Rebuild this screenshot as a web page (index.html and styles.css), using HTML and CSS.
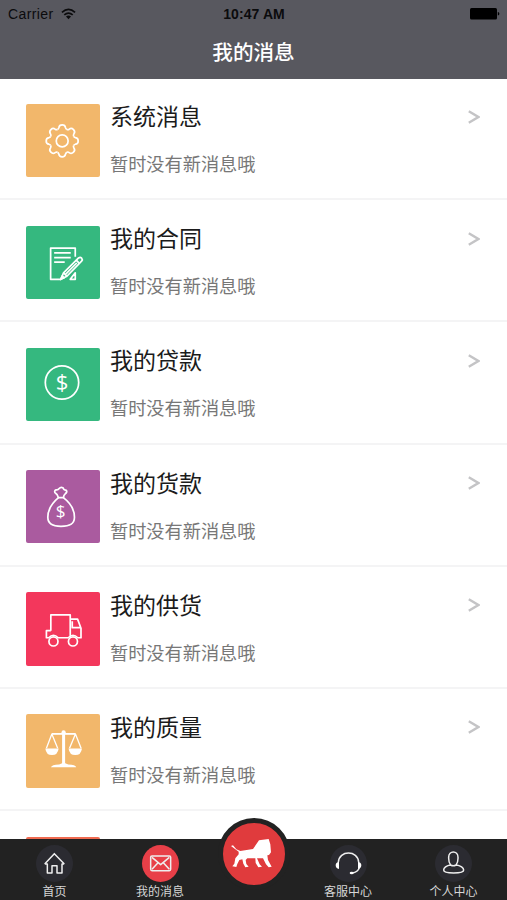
FILE: index.html
```
<!DOCTYPE html>
<html lang="zh-CN">
<head>
  <meta charset="UTF-8" />
  <meta name="viewport" content="width=device-width, initial-scale=1.0" />
  <title>我的消息</title>
  <link rel="stylesheet" href="styles.css">
</head>
<body>
  <div class="app">
    <header class="header">
      <div class="status">
        <div class="carrier">
          <span>Carrier</span>
          <svg class="wifi" viewBox="0 0 16 12">
            <path d="M1 4.2Q8-2 15 4.2M3.5 7Q8 3 12.5 7" fill="none" stroke="#0b0b0d" stroke-width="1.8"/>
            <path d="M5.3 8.6Q8 6.6 10.7 8.6L8 11.5Z" fill="#0b0b0d"/>
          </svg>
        </div>
        <span class="time">10:47 AM</span>
        <svg class="battery" viewBox="0 0 30 12">
          <rect x="0" y="0" width="27" height="11.4" rx="1.5"/>
          <path d="M27.8 4Q29.4 4.2 29.4 5.8T27.8 7.6Z"/>
        </svg>
      </div>
      <h1>我的消息</h1>
    </header>

    <main class="list">
      <div class="row">
        <div class="tile orange">
          <svg viewBox="0 0 73 73">
            <defs><path id="tooth" d="M-4.7-11.4Q-3.6-11.8-3.3-13.2Q-2.9-15.9 0-15.9T3.3-13.2Q3.6-11.8 4.7-11.4"/></defs>
            <g transform="translate(36 36.7)">
              <use href="#tooth"/>
              <use href="#tooth" transform="rotate(45)"/>
              <use href="#tooth" transform="rotate(90)"/>
              <use href="#tooth" transform="rotate(135)"/>
              <use href="#tooth" transform="rotate(180)"/>
              <use href="#tooth" transform="rotate(225)"/>
              <use href="#tooth" transform="rotate(270)"/>
              <use href="#tooth" transform="rotate(315)"/>
              <circle r="5.9"/>
            </g>
          </svg>
        </div>
        <div class="text"><h2>系统消息</h2><p>暂时没有新消息哦</p></div>
        <svg class="arrow" viewBox="0 0 12 14"><path d="M.8 1.3L10.3 7L.8 12.7"/></svg>
      </div>

      <div class="row">
        <div class="tile green">
          <svg viewBox="0 0 73 73">
            <path d="M49 30.5V22H24.5V53H35M28 26.8H44.5M28 31.5H44.5M28 36H38.5"/>
            <path d="M34.6 53L37.3 46.6L52.3 31.8Q54 30.6 55.3 32Q56.6 33.5 55.3 35L40.7 50Z"/>
            <path d="M37.3 46.6L40.7 50M50 34L53 37.2M39 48.3L50.5 36.8"/>
            <path d="M34.6 53L36 49.5L38 51.5Z" fill="#fff"/>
            <path d="M44 53H49V46.5Z"/>
          </svg>
        </div>
        <div class="text"><h2>我的合同</h2><p>暂时没有新消息哦</p></div>
        <svg class="arrow" viewBox="0 0 12 14"><path d="M.8 1.3L10.3 7L.8 12.7"/></svg>
      </div>

      <div class="row">
        <div class="tile green">
          <svg viewBox="0 0 73 73">
            <circle cx="35.8" cy="34.3" r="16.6"/>
            <text class="dollar" x="35.9" y="42" font-size="22">$</text>
          </svg>
        </div>
        <div class="text"><h2>我的贷款</h2><p>暂时没有新消息哦</p></div>
        <svg class="arrow" viewBox="0 0 12 14"><path d="M.8 1.3L10.3 7L.8 12.7"/></svg>
      </div>

      <div class="row">
        <div class="tile purple">
          <svg viewBox="0 0 73 73">
            <path d="M32.3 27.5Q31.5 24 28.7 22.3Q28 20.5 30 19.8Q31.8 20.2 33 18.5Q34.5 16.5 37 17.8Q37 19.5 40.2 20.3Q41.3 22 39 23.8Q37.5 25 37.2 27.5Z"/>
            <path d="M32.3 27.5C27 32 21.7 39 21.7 47C21.7 53.5 26 56 34.8 56C44 56 48.2 53.5 48.2 47C48.2 39 43 32 37.2 27.5"/>
            <text class="dollar" x="34.4" y="46.6" font-size="17">$</text>
          </svg>
        </div>
        <div class="text"><h2>我的货款</h2><p>暂时没有新消息哦</p></div>
        <svg class="arrow" viewBox="0 0 12 14"><path d="M.8 1.3L10.3 7L.8 12.7"/></svg>
      </div>

      <div class="row">
        <div class="tile red">
          <svg viewBox="0 0 73 73">
            <path d="M24.7 38.5V22.8H44V44.8M24.7 38.5H20.3V45.5H22.5Q27.3 40.5 32 45.5H42Q46.7 40.5 51.5 45.5H54.7V36L51.3 27H44M46 29V35.5H54.5"/>
            <circle cx="27.3" cy="49.2" r="4.5"/>
            <circle cx="46.7" cy="49.2" r="4.5"/>
          </svg>
        </div>
        <div class="text"><h2>我的供货</h2><p>暂时没有新消息哦</p></div>
        <svg class="arrow" viewBox="0 0 12 14"><path d="M.8 1.3L10.3 7L.8 12.7"/></svg>
      </div>

      <div class="row">
        <div class="tile orange">
          <svg viewBox="0 0 73 73">
            <path d="M25.7 19.8H49.3" stroke-width="1.8"/>
            <path d="M37.4 17.5V51" stroke-width="3"/>
            <path d="M20.3 34L25.7 20L31.5 34M43.3 34L49.2 20L54.8 34" stroke-width="1.3"/>
            <g fill="#fff" stroke="none">
              <circle cx="37.4" cy="18.3" r="2.1"/>
              <path d="M19.2 34.2H32.5Q31.5 40.9 25.8 40.9T19.2 34.2Z"/>
              <path d="M42.3 34.2H55.7Q54.7 40.9 49 40.9T42.3 34.2Z"/>
              <path d="M24.8 53Q25.5 50.5 33 50.2Q35.5 49.5 37.4 48Q39.5 49.5 42 50.2Q49.5 50.5 50 53Z"/>
            </g>
          </svg>
        </div>
        <div class="text"><h2>我的质量</h2><p>暂时没有新消息哦</p></div>
        <svg class="arrow" viewBox="0 0 12 14"><path d="M.8 1.3L10.3 7L.8 12.7"/></svg>
      </div>

      <div class="row">
        <div class="tile coral"></div>
      </div>
    </main>

    <nav class="tabbar">
      <a class="tab">
        <svg class="round" viewBox="109 120 111 111">
          <path d="M135 177L164 146L194 177M135 177H143V204H157V182H172V204H187V177H194"/>
        </svg>
        <span>首页</span>
      </a>
      <a class="tab active">
        <svg class="round" viewBox="425 120 111 111">
          <rect x="451" y="153" width="60" height="44" rx="4"/>
          <path d="M455 157L481 179L507 157M455 193L473 173M507 193L489 173"/>
        </svg>
        <span>我的消息</span>
      </a>
      <a class="tab center">
        <svg class="lion" viewBox="70 54 186 186">
          <path d="M94 123L100 121L110 133L122 138L160 132L178 106L207 102L212 118L214 142L208 150L203 151L205 165L216 185L207 187L199 178L190 160L172 160L180 178L187 185L176 187L168 174L167 160L143 160L138 165L140 177L147 185L137 187L131 176L128 163L119 165L113 177L110 186L98 184L104 176L107 160L117 148L117 140Z"/>
        </svg>
      </a>
      <a class="tab">
        <svg class="round" viewBox="90 118 111 111">
          <path d="M115 170C117 133 174 133 176 170M178 186Q174 200 156 202"/>
          <g fill="#fff" stroke="none">
            <path d="M117 168V190Q107 188 107 179T117 168ZM174 168V190Q184 188 184 179T174 168Z"/>
            <ellipse cx="155" cy="202" rx="6" ry="4"/>
          </g>
        </svg>
        <span>客服中心</span>
      </a>
      <a class="tab">
        <svg class="round" viewBox="406 118 111 111">
          <path d="M453 178C446 170 447 164 447 155C447 134 475 134 475 155C475 164 476 170 469 178M453 178C440 179 432 187 432 193C432 205 492 205 492 193C492 187 483 179 469 178Q461 183 453 178"/>
        </svg>
        <span>个人中心</span>
      </a>
    </nav>
  </div>
</body>
</html>
```
FILE: styles.css
```
* {
  box-sizing: border-box;
}
body {
  margin: 0;
  font-family: "Liberation Sans", "Noto Sans CJK SC", sans-serif;
  background: #fff;
}
h1, h2, p {
  margin: 0;
  font-weight: normal;
}
.app {
  display: flex;
  flex-direction: column;
  height: 900px;
  overflow: hidden;
}

/* header */
.header {
  flex: none;
  height: 79px;
  background: #58585f;
}
.status {
  display: grid;
  grid-template-columns: 1fr auto 1fr;
  align-items: center;
  height: 28px;
  padding: 0 7px 0 8px;
  font-size: 14px;
  color: #0b0b0d;
}
.carrier {
  display: flex;
  align-items: center;
  gap: 7px;
  letter-spacing: 0.4px;
}
.wifi {
  width: 15px;
  height: 12px;
}
.time {
  font-weight: bold;
  font-size: 14px;
  letter-spacing: 0.1px;
}
.battery {
  width: 30px;
  height: 12px;
  justify-self: end;
}
.header h1 {
  font-size: 20.6px;
  font-weight: 500;
  line-height: 50px;
  text-align: center;
  color: #fff;
}

/* message list */
.list {
  flex: 1;
  min-height: 0;
  overflow: hidden;
}
.row {
  display: flex;
  height: 122.2px;
  padding: 25.4px 27px 0 26.4px;
  border-bottom: 2px solid #f4f4f5;
}
.row:first-child {
  height: 121.2px;
  padding-top: 24.6px;
}
.tile {
  flex: none;
  width: 73.4px;
  height: 73.4px;
  border-radius: 2px;
}
.tile svg {
  display: block;
  width: 100%;
  height: 100%;
  fill: none;
  stroke: #fff;
  stroke-width: 1.7;
  stroke-linejoin: round;
}
.tile .dollar {
  font-family: "Open Sans", sans-serif;
  text-anchor: middle;
  fill: #fff;
  stroke: none;
}
.orange { background: #f2b76b; }
.green { background: #35b87f; }
.purple { background: #aa5b9f; }
.red { background: #f3375c; }
.coral { background: #f06a50; }
.text {
  flex: 1;
  padding: 0.6px 0 0 10.2px;
}
.text h2 {
  font-size: 23px;
  line-height: 26px;
  color: #1b1b1b;
}
.text p {
  margin-top: 22px;
  font-size: 18.2px;
  line-height: 26px;
  color: #777;
}
.arrow {
  width: 12px;
  height: 14px;
  margin-top: 6px;
  fill: none;
  stroke: #c4c4c6;
  stroke-width: 2.4;
}

/* bottom tabs */
.tabbar {
  flex: none;
  display: grid;
  grid-template-columns: 105.5px 105.5px 82.5px 105.5px 105.5px;
  height: 61px;
  padding-left: 1.8px;
  background: #222;
}
.tab {
  display: flex;
  flex-direction: column;
  align-items: center;
  padding-top: 5.5px;
  font-size: 12px;
  line-height: 20px;
  color: #d6d6d6;
}
.round {
  width: 37px;
  height: 37px;
  border-radius: 50%;
  background: #2b2b31;
  fill: none;
  stroke: #eee;
  stroke-width: 4.5;
  stroke-linejoin: round;
}
.active .round {
  background: #e83f48;
}
.center {
  padding: 0;
}
/* raised button sticking out of the bar */
.lion {
  flex: none;
  box-sizing: content-box;
  width: 62px;
  height: 62px;
  margin-top: -21.5px;
  border: 5.5px solid #222;
  border-radius: 50%;
  background: #e03b3d;
  fill: #fff;
}
```
